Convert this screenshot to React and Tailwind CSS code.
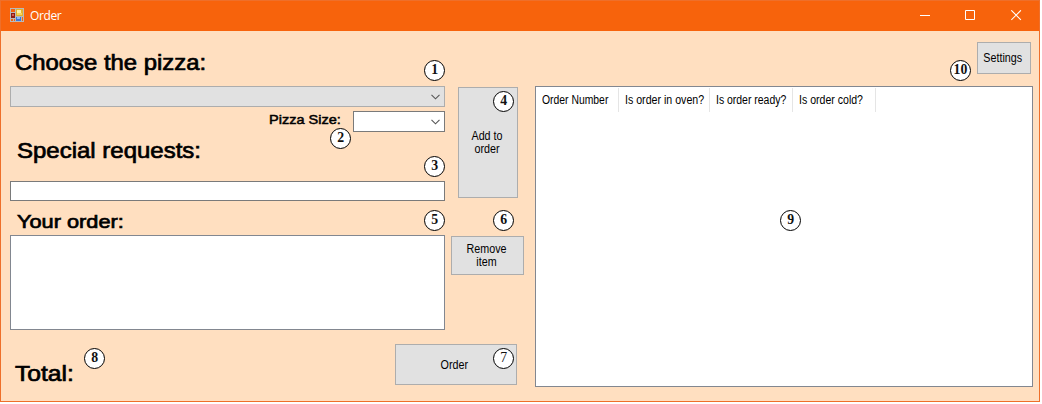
import React from "react";

const badges = [
  { n: "1", pos: "left-[424px] top-[60px]" },
  { n: "2", pos: "left-[330px] top-[128px]" },
  { n: "3", pos: "left-[424px] top-[156px]" },
  { n: "4", pos: "left-[493px] top-[91px]" },
  { n: "5", pos: "left-[424px] top-[210px]" },
  { n: "6", pos: "left-[493px] top-[210px]" },
  { n: "7", pos: "left-[493px] top-[348px]", light: true },
  { n: "8", pos: "left-[84px] top-[348px]" },
  { n: "9", pos: "left-[780px] top-[210px]" },
  { n: "10", pos: "left-[950px] top-[60px]" },
];

const columns = [
  { label: "Order Number", width: "w-[83px]", scale: "scale-x-[0.865]" },
  { label: "Is order in oven?", width: "w-[91px]", scale: "scale-x-[0.885]" },
  { label: "Is order ready?", width: "w-[83px]", scale: "scale-x-[0.87]" },
  { label: "Is order cold?", width: "w-[83px]", scale: "scale-x-[0.88]" },
];

function Badge({ n, pos, light }) {
  return (
    <span
      className={`absolute ${pos} flex h-[21px] w-[21px] justify-center rounded-full border border-black bg-white font-['Liberation_Serif',serif] text-[15px] leading-[17px] ${light ? "font-normal" : "font-bold"} text-[#111]`}
    >
      <span className="inline-block scale-x-[0.92]">{n}</span>
    </span>
  );
}

function Heading({ children, className }) {
  return (
    <div className={`w-fit origin-left whitespace-nowrap leading-none text-black [-webkit-text-stroke:0.7px_black] ${className}`}>
      {children}
    </div>
  );
}

function Button({ children, className }) {
  return (
    <button
      className={`flex shrink-0 items-center justify-center border border-[#adadad] bg-[#e1e1e1] text-center text-[12px] leading-[13px] text-black ${className}`}
    >
      <span className="inline-block scale-x-[0.895]">{children}</span>
    </button>
  );
}

function Chevron() {
  return (
    <svg className="h-[6px] w-[9px]" viewBox="0 0 9 6" fill="none" stroke="#555" strokeWidth="1.1">
      <path d="M0.5 0.8 4.5 4.8 8.5 0.8" />
    </svg>
  );
}

function AppIcon() {
  return (
    <svg className="h-[14px] w-[14px]" viewBox="0 0 14 14" shapeRendering="crispEdges">
      <path fill="#b9b9b9" d="M0 0h14v14H0z" />
      <path fill="#f7630c" d="M1 1h4v3H1zM1 11h2v2H1zM4 11h1v2H4zM12 9h1v4h-1z" />
      <path fill="#8c1c14" d="M1 5h4v5H1z" />
      <path fill="#d45a4e" d="M2 6h2v2H2z" />
      <path fill="#e3b32c" d="M6 1h7v7H6z" />
      <path fill="#fdf0a8" d="M7 2h4v3H7z" />
      <path fill="#f6d55a" d="M7 5h5v2H7z" />
      <path fill="#3d78d8" d="M6 9h5v4H6z" />
      <path fill="#8db8f5" d="M7 9h3v2H7z" />
    </svg>
  );
}

export default function App() {
  return (
    <div className="h-[404px] w-[1042px] overflow-hidden bg-white font-['Liberation_Sans',Arial,sans-serif]">
      <div className="relative flex h-[402px] w-[1040px] flex-col border border-[#ee6f2a] bg-[#ffdfc0]">
        <header className="flex h-[30px] shrink-0 items-start bg-[#f7630c] pl-[9px] text-white">
          <div className="flex items-center pt-[7px]">
            <AppIcon />
            <span className="ml-[6px] pt-[2px] font-['Open_Sans',sans-serif] text-[12px] leading-none tracking-[-0.4px]">
              Order
            </span>
          </div>
          <div className="ml-auto flex items-center gap-[35px] pr-[17px] pt-[9px]">
            <svg className="h-[11px] w-[11px]" viewBox="0 0 11 11" stroke="white">
              <path d="M1 5.5h10" />
            </svg>
            <svg className="h-[11px] w-[11px]" viewBox="0 0 11 11" fill="none" stroke="white">
              <path d="M0.5 0.5h9v9h-9z" />
            </svg>
            <svg className="h-[11px] w-[11px]" viewBox="0 0 11 11" stroke="white" strokeWidth="1.1">
              <path d="M0.3 0.3l9.6 9.6M9.9 0.3l-9.6 9.6" />
            </svg>
          </div>
        </header>

        <main className="flex min-h-0 flex-1 pl-[9px]">
          <section className="flex w-[514px] flex-col">
            <div className="flex h-[299px]">
              <div className="flex w-[435px] flex-col">
                <div className="h-[55px] pl-[5px] pt-[21px]">
                  <Heading className="scale-x-[1.085] text-[22px]">Choose the pizza:</Heading>
                </div>
                <div className="flex h-[21px] items-center justify-end border border-[#adadad] bg-[#e1e1e1] pr-[4px]">
                  <Chevron />
                </div>
                <div className="mt-[4px] flex h-[21px] justify-end">
                  <div className="mr-[12px] origin-right scale-x-[1.16] whitespace-nowrap pt-[3px] text-[12.5px] leading-none text-black [-webkit-text-stroke:0.5px_black]">
                    Pizza Size:
                  </div>
                  <div className="flex w-[92px] items-center justify-end border border-[#7a7a7a] bg-white pr-[4px]">
                    <Chevron />
                  </div>
                </div>
                <div className="h-[49px] pl-[7px] pt-[8px]">
                  <Heading className="scale-x-[1.09] text-[22px]">Special requests:</Heading>
                </div>
                <input className="block h-[20px] border border-[#7a7a7a] bg-white" />
                <div className="h-[34px] pl-[7px] pt-[11px]">
                  <Heading className="scale-x-[1.145] text-[19px]">Your order:</Heading>
                </div>
                <div className="h-[95px] border border-[#828790] bg-white" />
              </div>
              <div className="ml-[6px] flex w-[73px] flex-col items-center pt-[56px]">
                <Button className="h-[111px] w-[60px] pl-2 pr-[10px]">Add to order</Button>
                <Button className="mt-[38px] h-[39px] w-[73px] pl-3 pr-[14px]">Remove item</Button>
              </div>
            </div>
            <div className="flex justify-between pl-[5px] pr-[7px] pt-[14px]">
              <Heading className="mt-[19px] scale-x-[1.12] text-[22px]">Total:</Heading>
              <Button className="h-[41px] w-[122px] pr-[3px] pt-px">Order</Button>
            </div>
          </section>

          <section className="ml-[11px] flex w-[498px] flex-col">
            <div className="flex justify-end pr-[2px] pt-[11px]">
              <Button className="h-[32px] w-[54px] pr-[2px]">Settings</Button>
            </div>
            <div className="mt-[12px] h-[301px] border border-[#828790] bg-white pt-px">
              <div className="flex h-[24px] whitespace-nowrap text-[12px] leading-[24px] text-black">
                {columns.map((c) => (
                  <div key={c.label} className={`${c.width} border-r border-[#e5e5e5] pl-[6px]`}>
                    <span className={`inline-block origin-left ${c.scale}`}>{c.label}</span>
                  </div>
                ))}
              </div>
            </div>
          </section>
        </main>

        <div className="pointer-events-none absolute -left-px -top-px">
          {badges.map((b) => (
            <Badge key={b.n} {...b} />
          ))}
        </div>
      </div>
    </div>
  );
}
